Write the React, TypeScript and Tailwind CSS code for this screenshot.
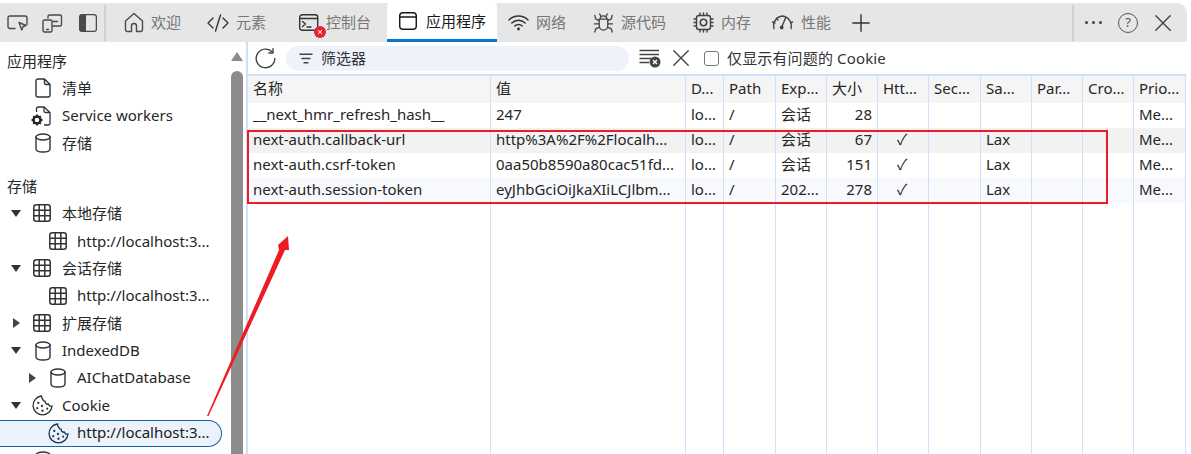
import React from "react";

const font = "font-['Noto_Sans','Noto_Sans_CJK_SC',sans-serif]";

function S({ w = 20, h = 20, vb = "0 0 20 20", className = "", children }: { w?: number; h?: number; vb?: string; className?: string; children: React.ReactNode }) {
  return (
    <svg width={w} height={h} viewBox={vb} fill="none" stroke="currentColor" strokeWidth={1.4} strokeLinecap="round" strokeLinejoin="round" className={"shrink-0 " + className}>
      {children}
    </svg>
  );
}

const Inspect = () => (
  <S w={21} h={20} vb="0 0 21 20" className="text-[#4a4a4a]">
    <path d="M8 15.500H3a2 2 0 0 1-2-2V5a2 2 0 0 1 2-2h15a2 2 0 0 1 2 2v6.500" />
    <path d="M12 9.500l7 3-3 1.200-1.200 3.300z" />
  </S>
);
const Device = () => (
  <S w={21} h={20} vb="0 0 21 20" className="text-[#4a4a4a]">
    <path d="M6 5V3.500A1.500 1.500 0 0 1 7.500 2H18a1.500 1.500 0 0 1 1.500 1.500v8A1.500 1.500 0 0 1 18 13h-7" />
    <rect x="1" y="7" width="9" height="12" rx="1.500" />
    <path d="M11 8.500h4.500M4.500 16.500h2" />
  </S>
);
const Panel = () => (
  <svg width="18" height="18" viewBox="0 0 18 18" className="shrink-0">
    <rect x=".6" y=".6" width="16.800" height="16.800" rx="2.500" fill="none" stroke="#4a4a4a" strokeWidth="1.300" />
    <path d="M3 .6H7v16.800H3A2.400 2.400 0 0 1 .6 15V3A2.400 2.400 0 0 1 3 .6z" fill="#4a4a4a" />
  </svg>
);
const Home = () => (
  <S w={20} h={21} vb="0 0 20 21" className="text-[#4a4a4a]">
    <path d="M7.500 19.500H3.500a2 2 0 0 1-2-2V9L10 1.500 18.500 9v8.500a2 2 0 0 1-2 2h-4V14a2.500 2.500 0 0 0-5 0z" />
  </S>
);
const Code = () => (
  <S w={22} h={18} vb="0 0 22 18" className="text-[#333]">
    <path d="M6 4L1 9l5 5M16 4l5 5-5 5M13.500 1L8.500 17" />
  </S>
);
const Console = () => (
  <S w={20} h={18} vb="0 0 20 18" className="text-[#333]">
    <rect x=".7" y=".7" width="18" height="15.500" rx="2.500" />
    <path d="M1 4.500h17.500M3.500 7.500l3 2.500-3 2.500M8 13h4" />
  </S>
);
const AppIcon = () => (
  <S w={18} h={18} vb="0 0 18 18" className="text-[#1a1a1a]">
    <rect x=".7" y=".7" width="16.600" height="16.600" rx="3" strokeWidth={1.500} />
    <path d="M1 5h16" strokeWidth={1.500} />
  </S>
);
const Wifi = () => (
  <S w={21} h={17} vb="0 0 21 17" className="text-[#333]">
    <path d="M1 6a13.500 13.500 0 0 1 19 0M3.800 9a9.500 9.500 0 0 1 13.400 0M6.800 12a5.300 5.300 0 0 1 7.400 0" strokeWidth={1.500} />
    <circle cx="10.500" cy="15" r="1.400" fill="currentColor" stroke="none" />
  </S>
);
const Bug = () => (
  <S w={21} h={22} vb="0 0 22 22" className="text-[#444]">
    <path d="M6.500 7h9v7a4.500 4.500 0 0 1-9 0zM7.500 7a3.500 3.500 0 0 1 7 0M7 1.500l1.500 3M15 1.500l-1.500 3M6.500 8.500L3 7 1.800 3M15.500 8.500L19 7l1.200-4M6.500 12H1.500M15.500 12h5M6.500 15.500L3 17l-1.200 3.500M15.500 15.500l3.500 1.500 1.200 3.500" />
  </S>
);
const Chip = () => (
  <S w={21} h={21} vb="0 0 21 21" className="text-[#444]">
    <rect x="3.500" y="3.500" width="14" height="14" rx="2.500" />
    <circle cx="10.500" cy="10.500" r="3.200" strokeWidth={1.600} />
    <path d="M7 1v2.500M10.500 1v2.500M14 1v2.500M7 17.500V20M10.500 17.500V20M14 17.500V20M1 7h2.500M1 10.500h2.500M1 14h2.500M17.500 7H20M17.500 10.500H20M17.500 14H20" />
  </S>
);
const Gauge = () => (
  <S w={23} h={17} vb="0 0 23 17" className="text-[#444]">
    <path d="M3 14.500A9.800 9.800 0 0 1 11.500 2a10 10 0 0 1 8.500 12.500M14.500 4l-3.500 8.500M1.500 8l2.500 1M5.500 4l1.500 2M21.500 8l-2 1" />
    <circle cx="10.700" cy="13.500" r="1.200" fill="currentColor" />
  </S>
);
const Plus = () => (
  <S w={18} h={18} vb="0 0 18 18" className="text-[#333]">
    <path d="M9 .8v16.400M.8 9h16.400" />
  </S>
);
const XIcon = ({ s = 16, c = "text-[#444]" }: { s?: number; c?: string }) => (
  <S w={s} h={s} vb="0 0 16 16" className={c}>
    <path d="M.8.800l14.400 14.400M15.200.800L.8 15.200" />
  </S>
);
const Refresh = () => (
  <S w={21} h={21} vb="0 0 21 21" className="text-[#444]">
    <path d="M17.500 4.300A9.300 9.300 0 1 0 19.800 10.500" />
    <path d="M18 .8v4.200h-4.200" />
  </S>
);
const FilterI = () => (
  <S w={14} h={11} vb="0 0 14 11" className="text-[#444]">
    <path d="M1 1.200h12M3 5.500h8M5 9.800h4" />
  </S>
);
const ClearFilter = () => (
  <svg width="22" height="20" viewBox="0 0 22 20" className="shrink-0">
    <path d="M.5 2.500H20M.5 6.500H20M.5 10.500H12M.5 14.500H10" stroke="#444" strokeWidth="1.300" fill="none" />
    <circle cx="16" cy="14" r="5.500" fill="#444" />
    <path d="M14 12l4 4M18 12l-4 4" stroke="#fff" strokeWidth="1.300" />
  </svg>
);
const Doc = () => (
  <S w={16} h={20} vb="0 0 16 20" className="text-[#333]">
    <path d="M9.500 1H3a2 2 0 0 0-2 2v14a2 2 0 0 0 2 2h10a2 2 0 0 0 2-2V6.500zM9.500 1v4a1.500 1.500 0 0 0 1.500 1.500h4" />
  </S>
);
const DocGear = () => (
  <svg width="20" height="20" viewBox="0 0 20 20" className="shrink-0">
    <path d="M5.500 6V3a2 2 0 0 1 2-2H13l6 5.500V17a2 2 0 0 1-2 2h-4M13 1v4a1.500 1.500 0 0 0 1.500 1.500H19" fill="none" stroke="#333" strokeWidth="1.300" />
    <circle cx="6" cy="14" r="3.500" fill="none" stroke="#222" strokeWidth="2.400" />
    <path d="M6 8.500v2M6 17.500v2M.5 14h2M9.500 14h2M2.200 10.200l1.400 1.400M8.400 16.400l1.400 1.400M2.200 17.800l1.400-1.400M8.400 11.600l1.400-1.400" stroke="#222" strokeWidth="1.800" />
  </svg>
);
const Db = () => (
  <S w={16} h={20} vb="0 0 16 20" className="text-[#333]">
    <ellipse cx="8" cy="4" rx="7" ry="3" />
    <path d="M1 4v12c0 1.700 3.100 3 7 3s7-1.300 7-3V4" />
  </S>
);
const Grid = () => (
  <S w={18} h={18} vb="0 0 18 18" className="text-[#333]">
    <rect x=".8" y=".8" width="16.400" height="16.400" rx="2.500" strokeWidth={1.500} />
    <path d="M6.200 1v16M11.800 1v16M1 6.200h16M1 11.800h16" strokeWidth={1.500} />
  </S>
);
const CookieI = ({ c = "text-[#333]" }: { c?: string }) => (
  <svg width="21" height="21" viewBox="0 0 20 20" className={"shrink-0 " + c}>
    <path d="M9 1a9 9 0 1 0 10 9.500c-1.500.5-3-.3-3.300-1.800-1.700.3-3.200-.8-3.200-2.600C10.700 6 9.200 3 9 1z" fill="none" stroke="currentColor" strokeWidth="1.300" />
    <g fill="currentColor">
      <circle cx="6" cy="7.500" r="1.100" />
      <circle cx="9.500" cy="10.500" r="1.100" />
      <circle cx="5" cy="12.500" r="1" />
      <circle cx="10" cy="15" r="1.100" />
      <circle cx="14.500" cy="13" r="1" />
    </g>
  </svg>
);
const Down = () => <span className="w-0 h-0 border-x-[5.500px] border-x-transparent border-t-[7px] border-t-[#333]" />;
const Right = () => <span className="w-0 h-0 border-y-[5.500px] border-y-transparent border-l-[7px] border-l-[#444]" />;

function Tab({ icon, label, ml, gap, badge }: { icon: React.ReactNode; label: string; ml: string; gap: string; badge?: boolean }) {
  return (
    <div className={`relative h-full flex items-center text-[15px] text-[#777] shrink-0 ${ml} ${gap}`}>
      {icon}
      {badge && (
        <span className="absolute left-[15px] top-[23px] w-[12px] h-[12px] rounded-full bg-[#e0282e] text-white flex items-center justify-center">
          <svg width="6" height="6" viewBox="0 0 6 6"><path d="M1 1l4 4M5 1L1 5" stroke="#fff" strokeWidth="1" /></svg>
        </span>
      )}
      <span>{label}</span>
    </div>
  );
}

function Toolbar() {
  return (
    <div className="h-[39px] mr-[4px] bg-[#e6e6e6] rounded-tr-[10px] flex items-center shrink-0 mt-[3px]">
      <div className="flex items-center w-[106px] h-[36px] pl-[7px] border-r-2 border-[#cfcfcf] shrink-0">
        <Inspect />
        <span className="ml-[14px]"><Device /></span>
        <span className="ml-[16px]"><Panel /></span>
      </div>
      <Tab icon={<Home />} label="欢迎" ml="ml-[18px]" gap="gap-[7px]" />
      <Tab icon={<Code />} label="元素" ml="ml-[26px]" gap="gap-[7px]" />
      <Tab icon={<Console />} label="控制台" ml="ml-[33px]" gap="gap-[7px]" badge />
      <div className="ml-[16px] w-[110px] h-full bg-white border-b-[3px] border-[#0078d4] rounded-t-[3px] flex items-center gap-[9px] pl-[12px] text-[15px] text-[#1a1a1a] shrink-0">
        <AppIcon />
        <span>应用程序</span>
      </div>
      <Tab icon={<Wifi />} label="网络" ml="ml-[11px]" gap="gap-[7px]" />
      <Tab icon={<Bug />} label="源代码" ml="ml-[27px]" gap="gap-[7px]" />
      <Tab icon={<Chip />} label="内存" ml="ml-[27px]" gap="gap-[7px]" />
      <Tab icon={<Gauge />} label="性能" ml="ml-[20px]" gap="gap-[7px]" />
      <span className="ml-[21px]"><Plus /></span>
      <div className="ml-auto w-[115px] h-[36px] border-l-2 border-[#cfcfcf] flex items-center pl-[11px] shrink-0">
        <div className="flex gap-[4px]">
          <span className="w-[3px] h-[3px] rounded-full bg-[#444]" />
          <span className="w-[3px] h-[3px] rounded-full bg-[#444]" />
          <span className="w-[3px] h-[3px] rounded-full bg-[#444]" />
        </div>
        <span className="ml-[16px] w-[20px] h-[20px] rounded-full border border-[#555] flex items-center justify-center text-[13px] text-[#555] leading-none">?</span>
        <span className="ml-[17px]"><XIcon /></span>
      </div>
    </div>
  );
}

function Row({ pad, arrow, arrowW = "w-[22px]", icon, iconW = "w-[29px]", label, selected, latin }: { pad: string; arrow?: React.ReactNode; arrowW?: string; icon?: React.ReactNode; iconW?: string; label: string; selected?: boolean; latin?: boolean }) {
  return (
    <div className={`h-[27.500px] flex items-center shrink-0 text-[15px] ${pad} ${selected ? "bg-[#ecf2fb] border border-l-0 border-[#1a62a0] rounded-r-[14px] text-[#1a1a1a] w-[222px]" : "text-[#262626]"}`}>
      {arrow && <span className={`flex items-center shrink-0 ${arrowW}`}>{arrow}</span>}
      {icon && <span className={`flex items-center shrink-0 ${iconW}`}>{icon}</span>}
      <span className={`whitespace-nowrap ${latin ? "mb-[2px]" : ""}`}>{label}</span>
    </div>
  );
}

const url = "http://localhost:3...";

function Sidebar() {
  return (
    <div className="w-[231px] h-full overflow-hidden shrink-0 flex flex-col pt-[5px]">
      <div className="h-[27.500px] shrink-0 flex items-center pl-[7px] text-[15px] text-[#262626]">应用程序</div>
      <Row pad="pl-[35px]" iconW="w-[27px]" icon={<Doc />} label="清单" />
      <Row pad="pl-[31px]" iconW="w-[31px]" icon={<DocGear />} label="Service workers" latin />
      <Row pad="pl-[35px]" iconW="w-[27px]" icon={<Db />} label="存储" />
      <div className="h-[15px] shrink-0" />
      <div className="h-[27.500px] shrink-0 flex items-center pl-[7px] text-[15px] text-[#262626]">存储</div>
      <Row pad="pl-[11px]" arrow={<Down />} iconW="w-[29px]" icon={<Grid />} label="本地存储" />
      <Row pad="pl-[49px]" iconW="w-[28px]" icon={<Grid />} label={url} />
      <Row pad="pl-[11px]" arrow={<Down />} iconW="w-[29px]" icon={<Grid />} label="会话存储" />
      <Row pad="pl-[49px]" iconW="w-[28px]" icon={<Grid />} label={url} latin />
      <Row pad="pl-[13px]" arrow={<Right />} arrowW="w-[20px]" iconW="w-[29px]" icon={<Grid />} label="扩展存储" />
      <Row pad="pl-[11px]" arrow={<Down />} arrowW="w-[24px]" iconW="w-[27px]" icon={<Db />} label="IndexedDB" latin />
      <Row pad="pl-[29px]" arrow={<Right />} arrowW="w-[21px]" iconW="w-[27px]" icon={<Db />} label="AIChatDatabase" latin />
      <Row pad="pl-[11px]" arrow={<Down />} arrowW="w-[21px]" iconW="w-[30px]" icon={<CookieI />} label="Cookie" latin />
      <Row pad="pl-[48px]" selected iconW="w-[29px]" icon={<CookieI c="text-[#14355c]" />} label={url} latin />
      <Row pad="pl-[35px]" iconW="w-[27px]" icon={<Db />} label="" />
    </div>
  );
}

function Scrollbar() {
  return (
    <div className="w-[12px] mr-[3px] shrink-0 h-full flex flex-col items-center pt-[10px]">
      <span className="w-0 h-0 border-x-[6px] border-x-transparent border-b-[9px] border-b-[#8c8c8c]" />
      <div className="mt-[10px] flex-1 w-full bg-[#8c8c8c] rounded-t-[6px]" />
    </div>
  );
}

const cols = "grid grid-cols-[243px_195px_38px_52px_51px_51px_51px_52px_51px_51px_51px_52px]";
const line = "border-r border-[#d0e0fb]";

const head = ["名称", "值", "D...", "Path", "Exp...", "大小", "Htt...", "Sec...", "Sa...", "Par...", "Cro...", "Prio..."];
const rows = [
  { bg: "bg-white", c: ["__next_hmr_refresh_hash__", "247", "lo...", "/", "会话", "28", "", "", "", "", "", "Me..."] },
  { bg: "bg-[#f2f2f2]", c: ["next-auth.callback-url", "http%3A%2F%2Flocalh...", "lo...", "/", "会话", "67", "✓", "", "Lax", "", "", "Me..."] },
  { bg: "bg-white", c: ["next-auth.csrf-token", "0aa50b8590a80cac51fd...", "lo...", "/", "会话", "151", "✓", "", "Lax", "", "", "Me..."] },
  { bg: "bg-[#f8f9fd]", c: ["next-auth.session-token", "eyJhbGciOiJkaXIiLCJlbm...", "lo...", "/", "202...", "278", "✓", "", "Lax", "", "", "Me..."] },
];

function cellCls(i: number) {
  if (i === 5) return "text-right pr-[5px] pl-[5px]";
  if (i === 6) return "text-center pr-[2px]";
  return "px-[5px]";
}

function Table() {
  return (
    <div className="w-[938px] h-full flex flex-col border-t-2 border-[#d0e0fb] text-[15px] text-[#262626]">
      <div className={`${cols} h-[27px] bg-[#f5f5f5] shrink-0`}>
        {head.map((h, i) => (
          <div key={i} className={`${line} px-[5px] leading-[25px] whitespace-nowrap overflow-hidden`}>{h}</div>
        ))}
      </div>
      {rows.map((r, ri) => (
        <div key={ri} className={`${cols} h-[25px] ${r.bg} shrink-0`}>
          {r.c.map((t, i) => (
            <div key={i} className={`${line} ${cellCls(i)} leading-[23px] whitespace-nowrap overflow-hidden`}>{t}</div>
          ))}
        </div>
      ))}
      <div className={`${cols} flex-1`}>
        {head.map((_, i) => (
          <div key={i} className={line} />
        ))}
      </div>
    </div>
  );
}

function Filterbar() {
  return (
    <div className="h-[32px] flex items-center shrink-0 relative">
      <span className="ml-[7px]"><Refresh /></span>
      <div className="ml-[10px] w-[343px] h-[25px] rounded-full bg-[#edf2fb] flex items-center pl-[13px] gap-[8px] text-[15px] text-[#333]">
        <FilterI />
        <span>筛选器</span>
      </div>
      <span className="ml-[10px]"><ClearFilter /></span>
      <span className="ml-[12px]"><XIcon /></span>
      <span className="ml-[15px] w-[15px] h-[15px] rounded-[3px] border border-[#777] bg-white shrink-0" />
      <span className="ml-[8px] text-[15px] text-[#333] whitespace-nowrap tracking-[0.15px]">仅显示有问题的 Cookie</span>
    </div>
  );
}

export default function App() {
  return (
    <div className={`relative w-[1191px] h-[454px] overflow-hidden bg-white flex flex-col ${font}`}>
      <Toolbar />
      <div className="flex-1 flex min-h-0">
        <Sidebar />
        <Scrollbar />
        <div className="flex flex-col flex-1 min-w-0 border-l-2 border-[#d0e0fb]">
          <Filterbar />
          <div className="flex-1 min-h-0"><Table /></div>
        </div>
      </div>
      <div className="absolute left-[247px] top-[130px] w-[861px] h-[74px] border-2 border-[#ed1c24] pointer-events-none" />
      <svg className="absolute left-0 top-0 pointer-events-none" width="1191" height="454" viewBox="0 0 1191 454">
        <path d="M207 416L279 250L278 245L288 236L289 250L285 250L208.500 416z" fill="#ed1c24" />
      </svg>
    </div>
  );
}
